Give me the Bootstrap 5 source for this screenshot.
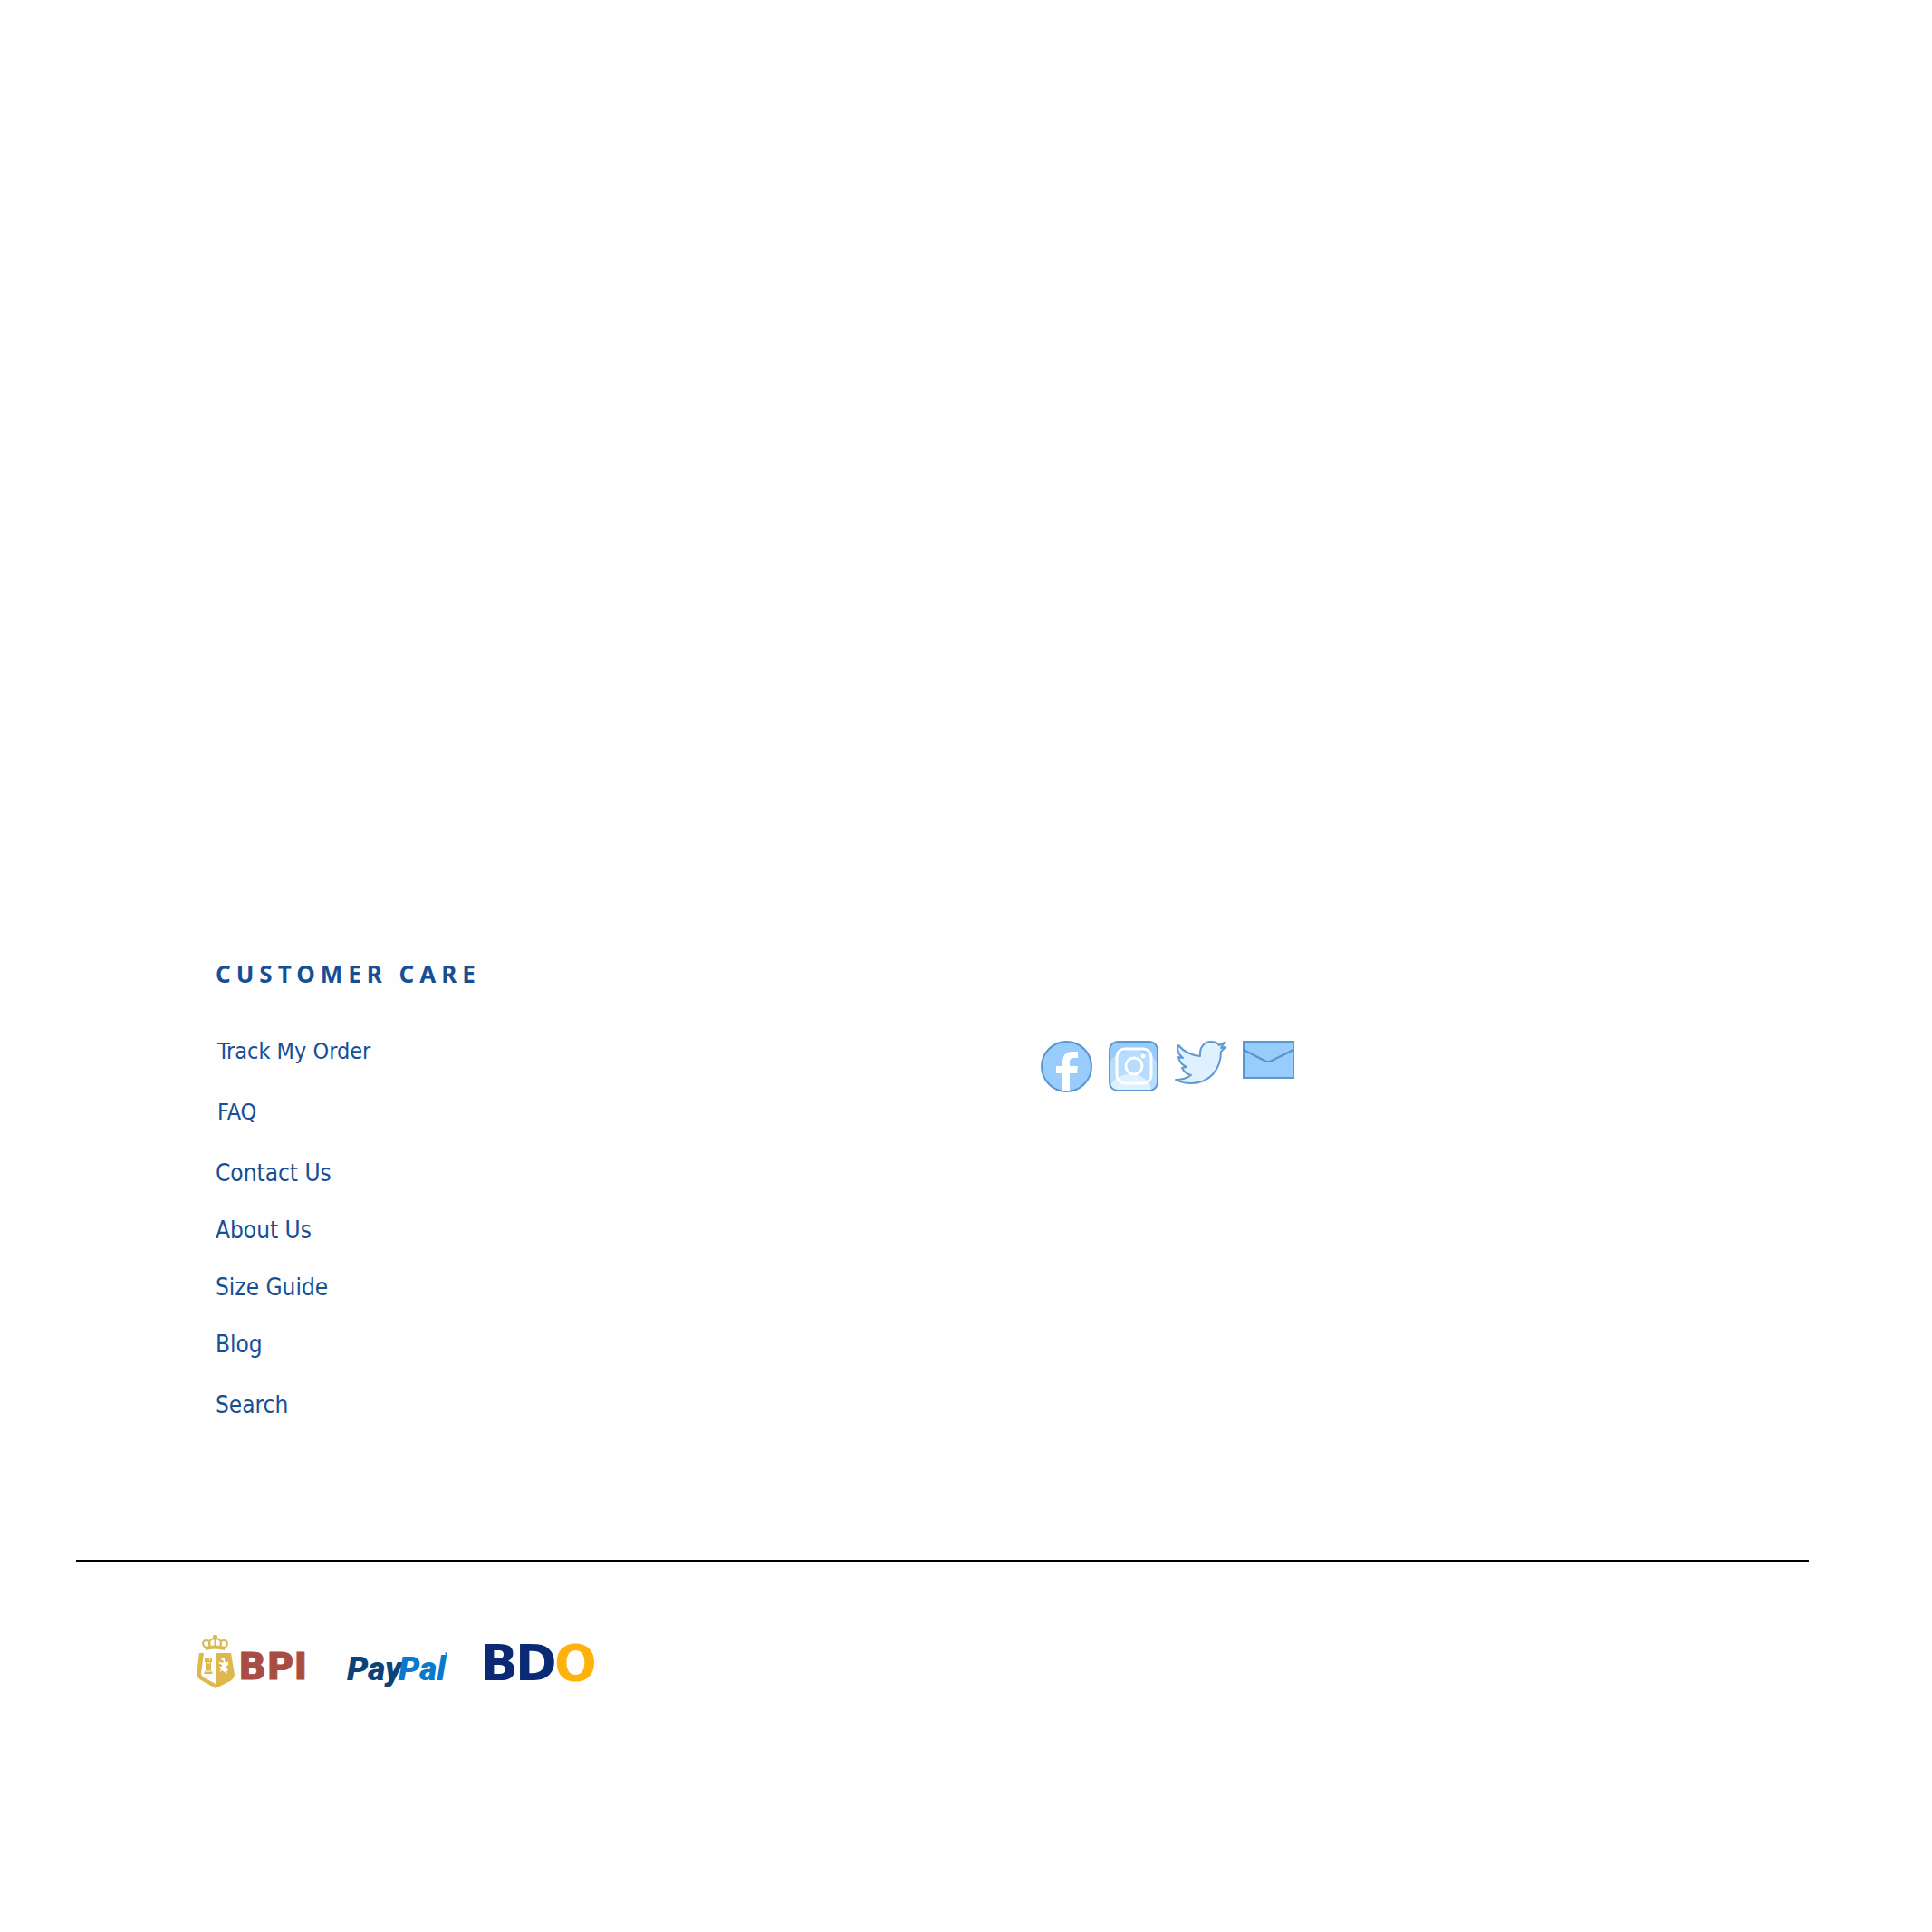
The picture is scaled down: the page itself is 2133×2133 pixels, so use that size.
<!DOCTYPE html>
<html lang="en">
<head>
<meta charset="utf-8">
<meta name="viewport" content="width=device-width, initial-scale=1">
<title>Customer Care</title>
<link rel="stylesheet" href="https://cdn.jsdelivr.net/npm/bootstrap@5.3.0/dist/css/bootstrap.min.css">
<style>
body { background: #fefefe; color: #174f95; font-family: "DejaVu Sans Condensed", "DejaVu Sans", sans-serif; }
.site-footer { padding-top: 1057px; }
.footer-links { padding: 0 73px 0 238px; }
.care-title { font-family: "Noto Sans", sans-serif; font-size: 26px; line-height: 36px; font-weight: 700; letter-spacing: 6px; margin-bottom: 50px; }
.care-list { font-size: 26px; line-height: 36px; gap: 27px; }
.care-list a { color: inherit; text-decoration: none; }
.care-list .spaced { margin-bottom: 4px; }
.care-list .compact { font-size: 25px; padding-left: 2px; }
.socials { gap: 18px; padding-top: 92px; }
.socials svg, .payments svg { display: block; overflow: visible; }
.footer-rule { margin: 153px 136px 80px 84px; border-top: 3px solid #000; opacity: 1; }
.payments { gap: 32px; padding: 0 73px 0 217px; }
.pay-bpi { font: 700 41px "DejaVu Sans", sans-serif; }
.pay-pal { font: italic 900 37px Roboto, sans-serif; }
.pay-bdo { font: 700 55px "DejaVu Sans", sans-serif; }
</style>
</head>
<body>
<footer class="site-footer">
  <div class="footer-links">
    <div class="row g-0">
      <nav class="col-6" aria-labelledby="care">
        <h2 class="care-title" id="care">CUSTOMER CARE</h2>
        <ul class="care-list list-unstyled d-flex flex-column align-items-start mb-0">
          <li class="spaced compact"><a href="#">Track My Order</a></li>
          <li class="spaced compact"><a href="#">FAQ</a></li>
          <li><a href="#">Contact Us</a></li>
          <li><a href="#">About Us</a></li>
          <li><a href="#">Size Guide</a></li>
          <li class="spaced"><a href="#">Blog</a></li>
          <li><a href="#">Search</a></li>
        </ul>
      </nav>
      <div class="col-6">
        <div class="socials d-flex align-items-start">
          <a href="#" aria-label="Facebook">
            <svg width="57" height="57" viewBox="0 0 57 57"><circle cx="28.500" cy="28.500" r="27.500" fill="#98ccfd" stroke="#4788c7" stroke-opacity=".85" stroke-width="2"/><path d="M24 56V36H17V28H24V24C24 16 28 12 35 12H41V19H37C33 19 32 20.500 32 24V28H41L40 36H32V56Z" fill="#fff"/></svg>
          </a>
          <a href="#" aria-label="Instagram">
            <svg width="55" height="57" viewBox="0 0 55 57"><defs><clipPath id="tile"><rect x="1" y="1" width="53" height="54" rx="9"/></clipPath></defs><rect x="1" y="1" width="53" height="54" rx="9" fill="#98ccfd"/><g clip-path="url(#tile)"><circle cx="27" cy="42" r="32" fill="#b6dcfe"/><ellipse cx="24" cy="55" rx="23" ry="18" fill="#dff0fe"/></g><rect x="1" y="1" width="53" height="54" rx="9" fill="none" stroke="#4788c7" stroke-opacity=".85" stroke-width="2"/><rect x="9" y="9" width="38" height="38" rx="9" fill="none" stroke="#fff" stroke-width="3"/><circle cx="28" cy="28" r="9" fill="none" stroke="#fff" stroke-width="3"/><circle cx="38" cy="17" r="2.500" fill="#fff"/></svg>
          </a>
          <a href="#" aria-label="Twitter">
            <svg width="57" height="49" viewBox="0 0 57 49"><path d="M4 5C10 12 18 16 28 17C27 8 32 1 40 1C44 1 47 2 49 5L55 2L51 8L56 7L51 12C51 32 38 47 18 47C11 47 6 46 1 43C9 43 14 41 18 38C13 37 10 34 8 30L13 29C8 27 5 23 4 18L9 19C4 15 2 10 4 5Z" fill="#dff0fe" stroke="#4788c7" stroke-opacity=".85" stroke-width="2" stroke-linejoin="round"/></svg>
          </a>
          <a href="#" aria-label="Email">
            <svg width="57" height="42" viewBox="0 0 57 42"><rect x="1" y="1" width="55" height="40" fill="#98ccfd" stroke="#4788c7" stroke-opacity=".85" stroke-width="2"/><path d="M1 10L24 22Q28 24 32 22L56 10" fill="none" stroke="#4788c7" stroke-opacity=".85" stroke-width="2"/></svg>
          </a>
        </div>
      </div>
    </div>
  </div>
  <hr class="footer-rule">
  <div class="payments d-flex align-items-start">
    <svg width="125" height="60" viewBox="0 0 125 60" role="img" aria-label="BPI">
      <g fill="none" stroke="#dcb84f" stroke-width="2"><path d="M10 14C5 10 7 6 11 6C15 6 15 10 14 14M15 14C12 7 16 4 20 4M31 14C36 10 34 6 30 6C26 6 26 10 27 14M26 14C29 7 25 4 21 4M20.500 4V14"/><path d="M18 2H23M20.500 0V6" stroke-width="3"/></g>
      <path d="M9 13Q20 10 32 13L31 17Q20 14 10 17Z" fill="#dcb84f"/>
      <path d="M3 20H8L5 43Q6 46 8 47L21 54V20L38 20L42 44Q41 49 37 51L21 59L5 50Q1 48 0 43Z" fill="#dcb84f"/>
      <path d="M9 26H11V28H12V26H14V28H15V26H17V30H16V39L18 43H8L10 39V30H9Z" fill="#dcb84f"/><path d="M11 31H15M10 40H16" stroke="#fff"/>
      <path d="M28 25L31 26L31 29L33 31L35 29V33L32 35L35 39L33 40L34 43L31 41L28 39L25 42L27 38L25 35L28 35V33L24 31L26 30L29 31L30 29L27 27Z" fill="#fff"/>
      <text class="pay-bpi" x="46" y="49" fill="#a94c43" stroke="#a94c43" stroke-width="1">BPI</text>
    </svg>
    <svg width="124" height="60" viewBox="0 0 124 60" role="img" aria-label="PayPal">
      <text class="pay-pal" x="9" y="50" fill="#0b4378">Pay<tspan x="66" fill="#0a79cc">Pal</tspan></text>
      <path d="M117 20H120M118.500 20V23" stroke="#0a79cc" fill="none"/>
    </svg>
    <svg width="129" height="60" viewBox="0 0 129 60" role="img" aria-label="BDO">
      <text class="pay-bdo" y="50" fill="#0a2a75"><tspan x="0">B</tspan><tspan x="39">D</tspan><tspan x="82" fill="#ffb20e">O</tspan></text>
    </svg>
  </div>
</footer>
<script src="https://cdn.jsdelivr.net/npm/bootstrap@5.3.0/dist/js/bootstrap.bundle.min.js"></script>
</body>
</html>
